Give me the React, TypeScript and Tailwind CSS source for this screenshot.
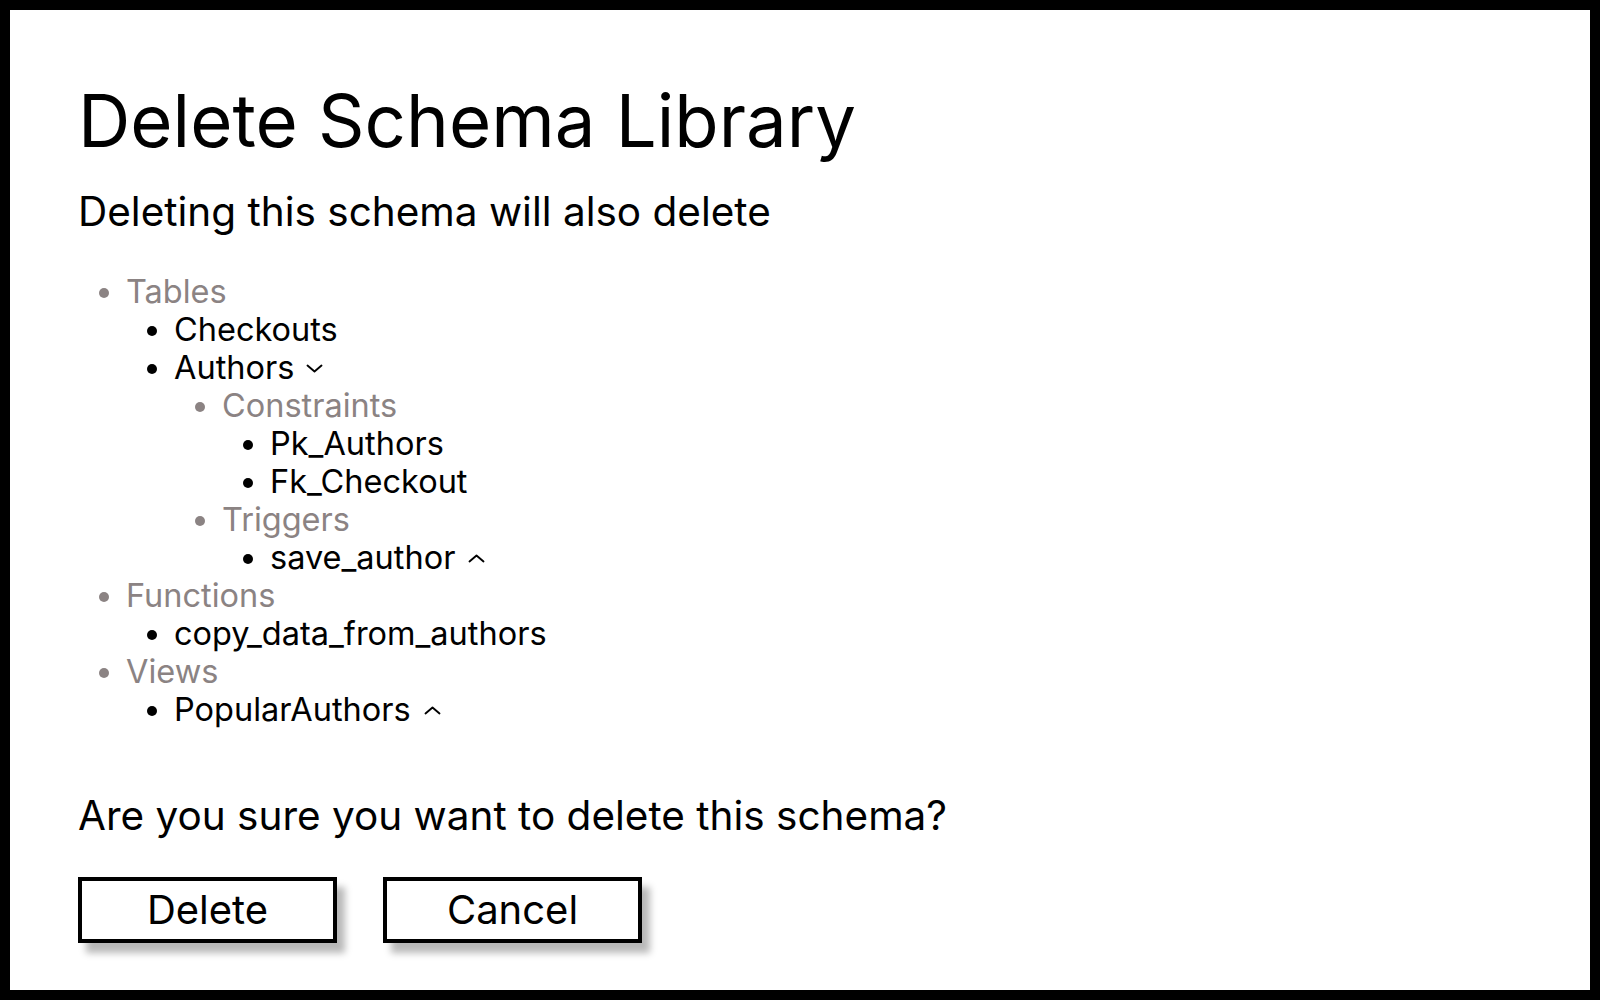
import React from 'react';

type Node = {
  label: string;
  muted?: boolean;
  chevron?: 'up' | 'down';
  children?: Node[];
};

const TREE: Node[] = [
  {
    label: 'Tables',
    muted: true,
    children: [
      { label: 'Checkouts' },
      {
        label: 'Authors',
        chevron: 'down',
        children: [
          {
            label: 'Constraints',
            muted: true,
            children: [{ label: 'Pk_Authors' }, { label: 'Fk_Checkout' }],
          },
          {
            label: 'Triggers',
            muted: true,
            children: [{ label: 'save_author', chevron: 'up' }],
          },
        ],
      },
    ],
  },
  {
    label: 'Functions',
    muted: true,
    children: [{ label: 'copy_data_from_authors' }],
  },
  {
    label: 'Views',
    muted: true,
    children: [{ label: 'PopularAuthors', chevron: 'up' }],
  },
];

const Chevron: React.FC<{ dir: 'up' | 'down' }> = ({ dir }) => (
  <svg
    width="17"
    height="9"
    viewBox="0 0 17 9"
    fill="none"
    stroke="currentColor"
    strokeWidth="1.9"
    strokeLinecap="round"
    strokeLinejoin="round"
    className={dir === 'down' ? 'inline-block ml-[12px] align-[6px]' : 'inline-block ml-[13px] align-[6px]'}
  >
    {dir === 'down' ? <path d="M1.5 1.5 L8.5 7.5 L15.5 1.5" /> : <path d="M1.5 7.5 L8.5 1.5 L15.5 7.5" />}
  </svg>
);

const Tree: React.FC<{ nodes: Node[] }> = ({ nodes }) => (
  <ul className="list-disc pl-[48px]">
    {nodes.map((n) => (
      <li key={n.label} className={n.muted ? 'text-[#8b8383]' : 'text-black'}>
        {n.label}
        {n.chevron && <Chevron dir={n.chevron} />}
        {n.children && <Tree nodes={n.children} />}
      </li>
    ))}
  </ul>
);

const DialogButton: React.FC<{ label: string }> = ({ label }) => (
  <button className="w-[259px] h-[66px] border-[4px] border-black bg-white text-[40px] leading-none text-black shadow-[8px_10px_7px_rgba(0,0,0,0.28)]">
    {label}
  </button>
);

export default function App() {
  return (
    <div
      className="h-screen w-full border-[10px] border-black bg-white text-black"
      style={{ fontFamily: 'Inter, "Noto Sans", sans-serif' }}
    >
      <div className="pl-[68px] pt-[74px]">
        <h1 className="text-[72.5px] leading-[73px]">Delete Schema Library</h1>
        <p className="mt-[31px] text-[40.5px] leading-[48px]">Deleting this schema will also delete</p>

        <div className="mt-[37px] text-[32.5px] leading-[38px]">
          <Tree nodes={TREE} />
        </div>

        <p className="mt-[63px] text-[40.5px] leading-[48px]">Are you sure you want to delete this schema?</p>

        <div className="mt-[37px] flex gap-[46px]">
          <DialogButton label="Delete" />
          <DialogButton label="Cancel" />
        </div>
      </div>
    </div>
  );
}
